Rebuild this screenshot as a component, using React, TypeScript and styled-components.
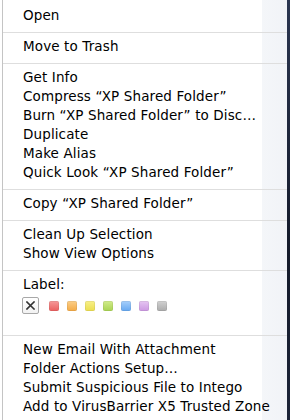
import React from "react";
import styled, { createGlobalStyle } from "styled-components";

const Global = createGlobalStyle`
  html, body { margin: 0; padding: 0; background: #ffffff; }
  body { font-family: "DejaVu Sans", "Liberation Sans", sans-serif; }
`;

const Stage = styled.div`
  display: flex;
  width: 290px;
  height: 420px;
  overflow: hidden;
  background: #ffffff;
`;

const Menu = styled.div`
  width: 284px;
  margin-left: 2px;
  border-left: 1px solid #c4c4c4;
  background: linear-gradient(to right, #ffffff 0, #ffffff 259px, #f4f6f9 259px, #f1f3f7 100%);
  padding-top: 6px;
  display: flex;
  flex-direction: column;
  color: #000;
  font-size: 13.5px;
  letter-spacing: 0.12px;
  line-height: 19px;
`;

const Desktop = styled.div`
  flex: 1;
  background: linear-gradient(to bottom, #2a3550, #141a2a 60%, #1c2438);
`;

const Item = styled.div`
  padding-left: 20px;
  height: 19px;
  white-space: nowrap;
`;

const Separator = styled.div`
  height: 1px;
  margin: 7px 0 4px;
  background: #dedede;
`;

const SwatchRow = styled.div`
  display: flex;
  align-items: center;
  gap: 8px;
  padding-left: 19px;
  margin: 3px 0 14px;
  height: 17px;
`;

const NoneBox = styled.div`
  width: 15px;
  height: 15px;
  border: 1px solid #a8a8a8;
  border-radius: 2px;
  background: linear-gradient(#ffffff, #f2f2f2);
  display: flex;
  align-items: center;
  justify-content: center;
  margin-right: 2px;
`;

const Swatch = styled.div<{ $c: string; $d: string }>`
  width: 10px;
  height: 10px;
  border-radius: 2px;
  box-sizing: border-box;
  background: linear-gradient(${(p) => p.$c}, ${(p) => p.$d});
  box-shadow: inset 0 0 0 0.5px rgba(0, 0, 0, 0.12);
`;

const swatches: [string, string][] = [
  ["#f69a9a", "#ea5f5f"],
  ["#fbcf8a", "#f4aa45"],
  ["#f8f08a", "#ebde4e"],
  ["#d2ec8c", "#a9d352"],
  ["#a8d0fb", "#66a8f1"],
  ["#e6c6f2", "#cc98e2"],
  ["#d2d2d2", "#ababab"],
];

const Cross = () => (
  <svg width="9" height="9" viewBox="0 0 9 9">
    <path d="M1 1 L8 8 M8 1 L1 8" stroke="#333" strokeWidth="1.6" strokeLinecap="square" />
  </svg>
);

export default function App() {
  return (
    <>
      <Global />
      <Stage>
        <Menu>
          <Item>Open</Item>
          <Separator />
          <Item>Move to Trash</Item>
          <Separator />
          <Item>Get Info</Item>
          <Item>Compress “XP Shared Folder”</Item>
          <Item>Burn “XP Shared Folder” to Disc…</Item>
          <Item>Duplicate</Item>
          <Item>Make Alias</Item>
          <Item>Quick Look “XP Shared Folder”</Item>
          <Separator />
          <Item>Copy “XP Shared Folder”</Item>
          <Separator />
          <Item>Clean Up Selection</Item>
          <Item>Show View Options</Item>
          <Separator />
          <Item>Label:</Item>
          <SwatchRow>
            <NoneBox>
              <Cross />
            </NoneBox>
            {swatches.map(([c, d], i) => (
              <Swatch key={i} $c={c} $d={d} />
            ))}
          </SwatchRow>
          <Separator />
          <Item>New Email With Attachment</Item>
          <Item>Folder Actions Setup…</Item>
          <Item>Submit Suspicious File to Intego</Item>
          <Item>Add to VirusBarrier X5 Trusted Zone</Item>
        </Menu>
        <Desktop />
      </Stage>
    </>
  );
}
